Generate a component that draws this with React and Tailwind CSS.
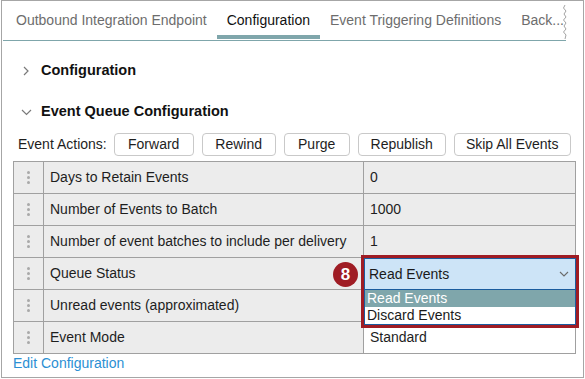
import React from "react";

const rows = [
  { name: "Days to Retain Events", value: "0", shade: true },
  { name: "Number of Events to Batch", value: "1000", shade: true },
  { name: "Number of event batches to include per delivery", value: "1", shade: true },
  { name: "Queue Status", value: "", shade: false, dropdown: true },
  { name: "Unread events (approximated)", value: "", shade: false },
  { name: "Event Mode", value: "Standard", shade: false },
];

const actions = [
  { label: "Forward", w: "w-[80px]" },
  { label: "Rewind", w: "w-[74px]" },
  { label: "Purge", w: "w-[66px]" },
  { label: "Republish", w: "w-[88px]" },
  { label: "Skip All Events", w: "w-[117px]" },
];

function Handle() {
  return (
    <div className="flex flex-col items-center gap-[2px]">
      <span className="w-[3px] h-[3px] rounded-full bg-[#a9a9a9]" />
      <span className="w-[3px] h-[3px] rounded-full bg-[#a9a9a9]" />
      <span className="w-[3px] h-[3px] rounded-full bg-[#a9a9a9]" />
    </div>
  );
}

function QueueDropdown() {
  return (
    <div className="absolute left-[-3px] top-[-3px] w-[218px] h-[73px] border-[3px] border-[#9f1c24] flex flex-col z-10">
      <div className="h-[32px] bg-[#cde4f7] border border-[#1b5c9e] flex items-center justify-between pl-[4px] pr-[5px] text-[#1a1a1a]">
        <span>Read Events</span>
        <svg width="10" height="6" viewBox="0 0 10 6" className="mr-[1px]">
          <path d="M1 1 L5 5 L9 1" fill="none" stroke="#6b6b6b" strokeWidth="1.1" />
        </svg>
      </div>
      <div className="h-[35px] bg-white border border-t-0 border-[#1b5c9e] flex flex-col">
        <div className="h-[17px] bg-[#7fa6ab] text-white leading-[17px] pl-[2px]">Read Events</div>
        <div className="h-[17px] leading-[17px] pl-[2px] text-[#1a1a1a]">Discard Events</div>
      </div>
      <div className="absolute left-[-31px] top-[4px] w-[25px] h-[25px] rounded-full bg-[#9f1c24] text-white font-bold text-[17px] flex items-center justify-center">
        8
      </div>
    </div>
  );
}

export default function App() {
  return (
    <div
      className="w-[585px] h-[379px] bg-white text-[14px] text-[#1e1e1e]"
      style={{ fontFamily: '"Liberation Sans", Arial, sans-serif' }}
    >
      <div className="ml-[1px] w-[583px] h-[378px] border border-[#a6a6a6] flex flex-col">
        {/* Tabs */}
        <div className="relative ml-[1px] w-[563px] h-[40px] border-b border-[#7fa6ab] flex items-stretch pl-[3px] text-[#6d6d6d] whitespace-nowrap">
          <div className="px-[10px] flex items-center">Outbound Integration Endpoint</div>
          <div className="relative px-[10px] flex items-center text-[#111]">
            Configuration
            <span className="absolute left-0 right-0 bottom-[1px] h-[4px] bg-[#7fa6ab]" />
          </div>
          <div className="px-[10px] flex items-center">Event Triggering Definitions</div>
          <div className="pl-[10px] flex items-center">Back...</div>
          <svg width="6" height="34" viewBox="0 0 6 34" className="absolute right-[-2px] top-[4px]">
            <path
              d="M3 0 L1.5 3 L4 6 L2 9 L4 12 L1.5 15 L4 18 L2 21 L4 24 L1.5 27 L4 30 L3 34"
              fill="none"
              stroke="#a3a3a3"
              strokeWidth="1"
            />
          </svg>
        </div>

        {/* Section headers */}
        <div className="h-[59px] flex items-center pl-[20px] gap-[11px]">
          <svg width="8" height="10" viewBox="0 0 8 10">
            <path d="M2 1 L6 5 L2 9" fill="none" stroke="#7a7a7a" strokeWidth="1.2" />
          </svg>
          <span className="font-bold text-[14.5px] text-[#111]">Configuration</span>
        </div>
        <div className="h-[24px] flex items-center pl-[19px] gap-[9px]">
          <svg width="11" height="8" viewBox="0 0 11 8">
            <path d="M1 2 L5.5 6.5 L10 2" fill="none" stroke="#7a7a7a" strokeWidth="1.2" />
          </svg>
          <span className="font-bold text-[14.5px] text-[#111]">Event Queue Configuration</span>
        </div>

        {/* Event actions */}
        <div className="mt-[9px] h-[23px] flex items-center pl-[16px]">
          <span className="mr-[7px]">Event Actions:</span>
          <div className="flex gap-[8px]">
            {actions.map((a) => (
              <button
                key={a.label}
                className={`${a.w} h-[23px] border border-[#c9c9c9] rounded-[4px] bg-white flex items-center justify-center text-[#1e1e1e]`}
              >
                {a.label}
              </button>
            ))}
          </div>
        </div>

        {/* Table */}
        <div className="mt-[5px] ml-[11px] w-[563px] border-l border-t border-[#a0a0a0]">
          {rows.map((r) => (
            <div key={r.name} className="flex h-[32px]">
              <div className="w-[30px] border-r border-b border-[#a0a0a0] bg-[#ececec] flex items-center justify-center">
                <Handle />
              </div>
              <div className="w-[320px] border-r border-b border-[#a0a0a0] bg-[#ececec] flex items-center pl-[6px] whitespace-nowrap">
                {r.name}
              </div>
              <div
                className={`relative w-[212px] border-r border-b border-[#a0a0a0] flex items-center pl-[6px] ${
                  r.shade ? "bg-[#ececec]" : "bg-white"
                }`}
              >
                {r.value}
                {r.dropdown && <QueueDropdown />}
              </div>
            </div>
          ))}
        </div>

        <div className="ml-[11px] h-[18px] flex items-center text-[#2b8fd3]">Edit Configuration</div>
      </div>
    </div>
  );
}
